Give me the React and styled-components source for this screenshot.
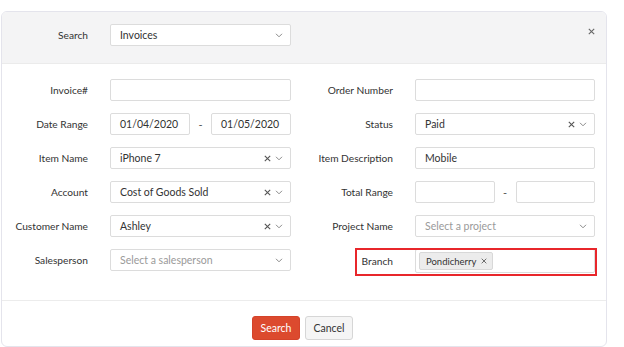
import React from "react";
import styled, { createGlobalStyle } from "styled-components";

const Global = createGlobalStyle`
  html, body { margin: 0; padding: 0; background: #ffffff; }
  body { font-family: Lato, "Open Sans", Arial, sans-serif; color: #333; }
  * { box-sizing: border-box; }
`;

const Modal = styled.div`
  margin: 11px 0 0 1px;
  width: 606px;
  border: 1px solid #e4e4ec;
  border-radius: 6px;
  overflow: hidden;
  background: #fff;
`;

const Header = styled.div`
  display: flex;
  align-items: flex-start;
  height: 52px;
  padding-top: 12px;
  background: #f4f4f5;
  border-bottom: 1px solid #ebebeb;
`;

const CloseBtn = styled.button`
  margin-left: auto;
  margin-right: 8px;
  width: 14px;
  height: 14px;
  padding: 0;
  border: 0;
  background: transparent;
  display: flex;
  align-items: center;
  justify-content: center;
  cursor: pointer;
`;

const Body = styled.div`
  display: grid;
  grid-template-columns: 289px 288px;
  column-gap: 16px;
  row-gap: 12px;
  align-items: start;
  padding: 15px 0 27px;
`;

const Field = styled.div`
  position: relative;
  display: grid;
  grid-template-columns: 86px ${(p) => p.$w || 181}px;
  column-gap: 22px;
  align-items: center;
  ${(p) =>
    p.$highlight &&
    `
    &::after {
      content: "";
      position: absolute;
      left: 48px;
      right: -2px;
      top: -1px;
      bottom: -3px;
      border: 2px solid #e8262b;
      pointer-events: none;
    }
  `}
`;

const Label = styled.label`
  font-size: 10.2px;
  color: #333;
  text-align: right;
  white-space: nowrap;
`;

const Box = styled.div`
  height: ${(p) => p.$h || 22}px;
  border: 1px solid #dcdcdc;
  border-radius: 2px;
  background: #fff;
  display: flex;
  align-items: center;
  padding: 0 7px 0 9px;
  font-size: 10.5px;
  color: ${(p) => (p.$placeholder ? "#9a9a9a" : "#333")};
  white-space: nowrap;
`;

const TagBox = styled(Box)`
  padding: 0 3px;
`;

const Value = styled.span`
  flex: 1;
`;

const Icons = styled.span`
  display: flex;
  align-items: center;
  gap: 4px;
`;

const Range = styled.div`
  display: grid;
  grid-template-columns: 1fr 21px 1fr;
  align-items: center;
`;

const Dash = styled.span`
  text-align: center;
  font-size: 11px;
  color: #555;
`;

const Tag = styled.span`
  display: inline-flex;
  align-items: center;
  gap: 5px;
  height: 18px;
  padding: 0 5px 0 6px;
  background: #ececec;
  border: 1px solid #d8d8d8;
  border-radius: 2px;
  font-size: 9.5px;
  color: #333;
`;

const Footer = styled.div`
  display: flex;
  justify-content: center;
  gap: 5px;
  padding: 15px 3px 6px 0;
  border-top: 1px solid #ececec;
`;

const Button = styled.button`
  width: 48px;
  height: 24px;
  border-radius: 3px;
  font-family: inherit;
  font-size: 10.5px;
  padding: 0;
  cursor: pointer;
  border: 1px solid ${(p) => (p.$primary ? "#d4432a" : "#d6d6d6")};
  background: ${(p) => (p.$primary ? "#dc4a2e" : "#f5f5f5")};
  color: ${(p) => (p.$primary ? "#fff" : "#333")};
`;

const Chevron = () => (
  <svg width="8" height="5" viewBox="0 0 8 5">
    <polyline points="1,0.8 4,3.8 7,0.8" fill="none" stroke="#8a8a8a" strokeWidth="1" />
  </svg>
);

const Clear = ({ size = 7, color = "#555" }) => (
  <svg width={size} height={size} viewBox="0 0 7 7">
    <path d="M0.8 0.8 L6.2 6.2 M6.2 0.8 L0.8 6.2" stroke={color} strokeWidth="1.1" />
  </svg>
);

const Select = ({ value, placeholder, clearable }) => (
  <Box $placeholder={!value}>
    <Value>{value || placeholder}</Value>
    <Icons>
      {clearable && <Clear />}
      <Chevron />
    </Icons>
  </Box>
);

const Input = ({ value }) => <Box>{value}</Box>;

export default function App() {
  return (
    <>
      <Global />
      <Modal>
        <Header>
          <Field>
            <Label>Search</Label>
            <Select value="Invoices" />
          </Field>
          <CloseBtn aria-label="Close">
            <Clear size={7} color="#666" />
          </CloseBtn>
        </Header>
        <Body>
          <Field>
            <Label>Invoice#</Label>
            <Input />
          </Field>
          <Field $w={180}>
            <Label>Order Number</Label>
            <Input />
          </Field>

          <Field>
            <Label>Date Range</Label>
            <Range>
              <Input value="01/04/2020" />
              <Dash>-</Dash>
              <Input value="01/05/2020" />
            </Range>
          </Field>
          <Field $w={180}>
            <Label>Status</Label>
            <Select value="Paid" clearable />
          </Field>

          <Field>
            <Label>Item Name</Label>
            <Select value="iPhone 7" clearable />
          </Field>
          <Field $w={180}>
            <Label>Item Description</Label>
            <Input value="Mobile" />
          </Field>

          <Field>
            <Label>Account</Label>
            <Select value="Cost of Goods Sold" clearable />
          </Field>
          <Field $w={180}>
            <Label>Total Range</Label>
            <Range>
              <Input />
              <Dash>-</Dash>
              <Input />
            </Range>
          </Field>

          <Field>
            <Label>Customer Name</Label>
            <Select value="Ashley" clearable />
          </Field>
          <Field $w={180}>
            <Label>Project Name</Label>
            <Select placeholder="Select a project" />
          </Field>

          <Field>
            <Label>Salesperson</Label>
            <Select placeholder="Select a salesperson" />
          </Field>
          <Field $w={180} $highlight>
            <Label>Branch</Label>
            <TagBox $h={24}>
              <Tag>
                Pondicherry
                <Clear size={6} color="#666" />
              </Tag>
            </TagBox>
          </Field>
        </Body>
        <Footer>
          <Button $primary>Search</Button>
          <Button>Cancel</Button>
        </Footer>
      </Modal>
    </>
  );
}
